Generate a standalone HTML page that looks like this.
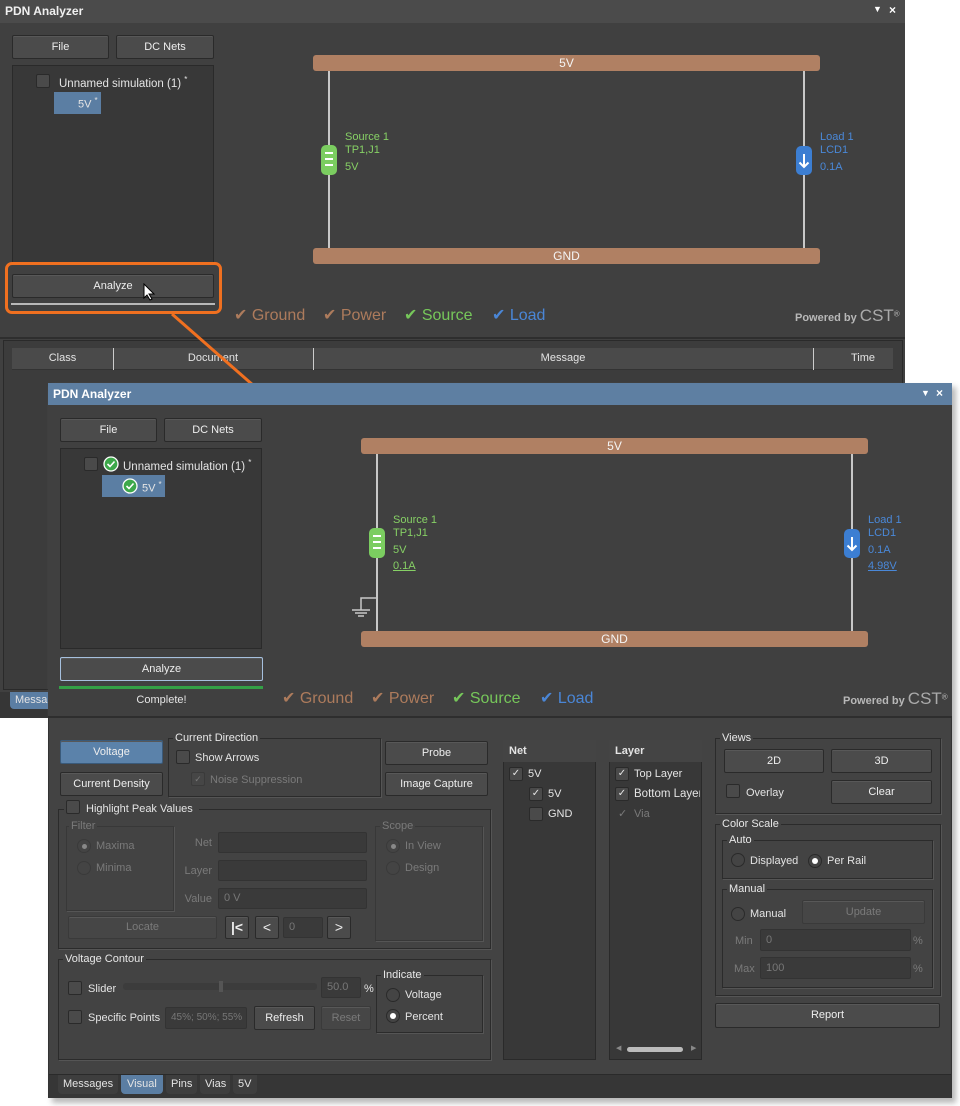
<!DOCTYPE html>
<html><head><meta charset="utf-8"><style>
*{box-sizing:border-box;margin:0;padding:0}
body{width:960px;height:1106px;background:#fff;position:relative;overflow:hidden;font-family:"Liberation Sans",sans-serif;font-size:11px;color:#e4e4e4}
.a{position:absolute}
.btn{position:absolute;background:#4b4b4b;border:1px solid #2a2a2a;border-radius:2px;text-align:center;color:#eee;font-size:11px;box-shadow:inset 0 1px 0 #585858}
.gb{position:absolute;border:1px solid #2b2b2b;box-shadow:1px 1px 0 #555}
.gt{position:absolute;top:-8px;left:6px;background:#434343;padding:0 2px;font-size:11px;color:#e8e8e8;line-height:14px}
.cb{position:absolute;width:14px;height:14px;border:1px solid #2a2a2a;background:#4a4a4a;border-radius:2px}
.rd{position:absolute;width:14px;height:14px;border:1px solid #2a2a2a;background:#444;border-radius:50%}
.inp{position:absolute;background:#3a3a3a;border:1px solid #333;border-radius:2px;color:#777;padding-left:5px;font-size:11px}
.dis{color:#7a7a7a}
.rail{position:absolute;background:#b08063;border-radius:3px;text-align:center;color:#f4f4f4;font-size:12px;line-height:16px}
.vl{position:absolute;width:2px;background:#c8c8c8}
.lg{position:absolute;font-size:16px;line-height:18px}
</style></head><body>

<!-- WINDOW 1 -->
<div class="a" style="left:0;top:0;width:905px;height:718px;background:#404040"></div>
<div class="a" style="left:0;top:0;width:905px;height:23px;background:#4b4b4b"></div>
<div class="a" style="left:5px;top:4px;font-weight:bold;font-size:12px;color:#f0f0f0">PDN Analyzer</div>
<div class="a" style="left:873px;top:4px;font-size:9px;color:#fff">▼</div>
<div class="a" style="left:889px;top:3px;font-size:12px;color:#fff;font-weight:bold">×</div>
<div class="btn" style="left:12px;top:35px;width:97px;height:24px;line-height:22px">File</div>
<div class="btn" style="left:116px;top:35px;width:98px;height:24px;line-height:22px">DC Nets</div>
<div class="a" style="left:12px;top:65px;width:202px;height:200px;background:#383838;border:1px solid #2a2a2a"></div>
<div class="cb" style="left:36px;top:74px"></div>
<div class="a" style="left:59px;top:75px;font-size:11.5px">Unnamed simulation (1) <sup style="font-size:8px">*</sup></div>
<div class="a" style="left:54px;top:92px;width:47px;height:22px;background:#5b7ea3;padding:4px 0 0 24px">5V <sup style="font-size:8px">*</sup></div>
<div class="btn" style="left:12px;top:274px;width:202px;height:24px;line-height:22px">Analyze</div>
<div class="a" style="left:11px;top:303px;width:204px;height:2px;background:#b8b8b8"></div>
<svg class="a" style="left:142px;top:283px" width="14" height="18"><path d="M2 1 L2 15 L5 12 L8 17 L10 16 L7 11 L12 11 Z" fill="#fff" stroke="#000" stroke-width="1"/></svg>
<div class="a" style="left:5px;top:262px;width:217px;height:52px;border:3px solid #f07020;border-radius:7px"></div>
<div class="rail" style="left:313px;top:55px;width:507px;height:16px">5V</div>
<div class="rail" style="left:313px;top:248px;width:507px;height:16px">GND</div>
<div class="vl" style="left:328px;top:71px;height:177px"></div>
<div class="vl" style="left:803px;top:71px;height:177px"></div>
<div class="a" style="left:321px;top:145px;width:16px;height:30px;background:#7bcd60;border-radius:5px"></div>
<div class="a" style="left:325px;top:152px;width:8px;height:14px;border-top:2px solid #fff;border-bottom:2px solid #fff"><div style="margin-top:4px;height:2px;background:#fff"></div></div>
<div class="a" style="left:345px;top:131px;color:#86d065;font-size:11px;line-height:13px">Source 1<br>TP1,J1<br><span style="line-height:20px">5V</span></div>
<div class="a" style="left:796px;top:146px;width:16px;height:29px;background:#3c7ed2;border-radius:5px"></div>
<svg class="a" style="left:796px;top:146px" width="16" height="29"><path d="M8 8 V21 M3.5 16.5 L8 21 L12.5 16.5" stroke="#fff" stroke-width="2" fill="none"/></svg>
<div class="a" style="left:820px;top:131px;color:#4a88d8;font-size:11px;line-height:13px">Load 1<br>LCD1<br><span style="line-height:20px">0.1A</span></div>
<div class="lg" style="left:234px;top:307px;color:#ad7b5c">✔ Ground</div>
<div class="lg" style="left:323px;top:307px;color:#ad7b5c">✔ Power</div>
<div class="lg" style="left:404px;top:307px;color:#76c75a">✔ Source</div>
<div class="lg" style="left:492px;top:307px;color:#4a86d6">✔ Load</div>
<div class="a" style="left:795px;top:306px;color:#b8b8b8;font-size:11px;font-weight:bold">Powered by <span style="font-size:17px;font-weight:normal;color:#aaa">CST</span><sup style="font-size:8px;font-weight:normal">®</sup></div>
<div class="a" style="left:0;top:337px;width:905px;height:2px;background:#2e2e2e"></div>
<div class="a" style="left:3px;top:340px;width:900px;height:350px;background:#3c3c3c;border:1px solid #2a2a2a"></div>
<div class="a" style="left:12px;top:348px;width:881px;height:22px;background:#4a4a4a;border-bottom:1px solid #333"></div>
<div class="a" style="left:12px;top:352px;width:101px;text-align:center">Class</div>
<div class="a" style="left:113px;top:348px;width:1px;height:22px;background:#ccc"></div>
<div class="a" style="left:113px;top:352px;width:200px;text-align:center">Document</div>
<div class="a" style="left:313px;top:348px;width:1px;height:22px;background:#ccc"></div>
<div class="a" style="left:313px;top:352px;width:500px;text-align:center">Message</div>
<div class="a" style="left:813px;top:348px;width:1px;height:22px;background:#ccc"></div>
<div class="a" style="left:813px;top:352px;width:100px;text-align:center">Time</div>
<div class="a" style="left:0;top:692px;width:905px;height:26px;background:#363636"></div>
<div class="a" style="left:10px;top:692px;width:50px;height:17px;background:#5b7ea3;border-radius:0 0 4px 4px;padding:2px 0 0 5px">Messa</div>
<svg class="a" style="left:0;top:0" width="960" height="1106"><line x1="172" y1="314" x2="262" y2="393" stroke="#f07020" stroke-width="3"/><path d="M270 400 L256 394 L264 386 Z" fill="#f07020"/></svg>

<!-- WINDOW 2 -->
<div class="a" style="left:52px;top:387px;width:904px;height:716px;background:#9a9a9a;filter:blur(3px);opacity:.7"></div>
<div class="a" style="left:48px;top:383px;width:904px;height:715px;background:#434343;border:1px solid #333"></div>
<div class="a" style="left:48px;top:383px;width:904px;height:22px;background:#5e7fa2"></div>
<div class="a" style="left:53px;top:387px;font-weight:bold;font-size:12px;color:#fff">PDN Analyzer</div>
<div class="a" style="left:921px;top:388px;font-size:9px;color:#fff">▼</div>
<div class="a" style="left:936px;top:386px;font-size:12px;color:#fff;font-weight:bold">×</div>
<div class="a" style="left:48px;top:405px;width:904px;height:312px;background:#404040"></div>
<div class="btn" style="left:60px;top:418px;width:97px;height:24px;line-height:22px">File</div>
<div class="btn" style="left:164px;top:418px;width:98px;height:24px;line-height:22px">DC Nets</div>
<div class="a" style="left:60px;top:448px;width:202px;height:201px;background:#383838;border:1px solid #2a2a2a"></div>
<div class="cb" style="left:84px;top:457px"></div>
<svg class="a" style="left:103px;top:456px" width="16" height="16"><circle cx="8" cy="8" r="7" fill="#3da84a" stroke="#fff" stroke-width="1.3"/><path d="M4.5 8 L7 10.5 L11.5 5.5" stroke="#fff" stroke-width="1.6" fill="none"/></svg>
<div class="a" style="left:123px;top:458px;font-size:11.5px">Unnamed simulation (1) <sup style="font-size:8px">*</sup></div>
<div class="a" style="left:102px;top:475px;width:63px;height:22px;background:#5b7ea3"></div>
<svg class="a" style="left:122px;top:478px" width="16" height="16"><circle cx="8" cy="8" r="7" fill="#3da84a" stroke="#fff" stroke-width="1.3"/><path d="M4.5 8 L7 10.5 L11.5 5.5" stroke="#fff" stroke-width="1.6" fill="none"/></svg>
<div class="a" style="left:142px;top:480px">5V <sup style="font-size:8px">*</sup></div>
<div class="btn" style="left:60px;top:657px;width:203px;height:24px;line-height:22px;border-color:#a6c0de">Analyze</div>
<div class="a" style="left:59px;top:686px;width:204px;height:3px;background:#34a046"></div>
<div class="a" style="left:60px;top:694px;width:203px;text-align:center">Complete!</div>
<div class="rail" style="left:361px;top:438px;width:507px;height:16px">5V</div>
<div class="rail" style="left:361px;top:631px;width:507px;height:16px">GND</div>
<div class="vl" style="left:376px;top:454px;height:177px"></div>
<div class="vl" style="left:851px;top:454px;height:177px"></div>
<div class="a" style="left:369px;top:528px;width:16px;height:30px;background:#7bcd60;border-radius:5px"></div>
<div class="a" style="left:373px;top:535px;width:8px;height:14px;border-top:2px solid #fff;border-bottom:2px solid #fff"><div style="margin-top:4px;height:2px;background:#fff"></div></div>
<svg class="a" style="left:348px;top:596px" width="30" height="22"><path d="M29 2 H13 V14 M4 14 H22 M7 17 H19 M10 20 H16" stroke="#c8c8c8" stroke-width="1.5" fill="none"/></svg>
<div class="a" style="left:393px;top:514px;color:#86d065;font-size:11px;line-height:13px">Source 1<br>TP1,J1<br><span style="line-height:20px">5V</span><br><u>0.1A</u></div>
<div class="a" style="left:844px;top:529px;width:16px;height:29px;background:#3c7ed2;border-radius:5px"></div>
<svg class="a" style="left:844px;top:529px" width="16" height="29"><path d="M8 8 V21 M3.5 16.5 L8 21 L12.5 16.5" stroke="#fff" stroke-width="2" fill="none"/></svg>
<div class="a" style="left:868px;top:514px;color:#4a88d8;font-size:11px;line-height:13px">Load 1<br>LCD1<br><span style="line-height:20px">0.1A</span><br><u>4.98V</u></div>
<div class="lg" style="left:282px;top:690px;color:#ad7b5c">✔ Ground</div>
<div class="lg" style="left:371px;top:690px;color:#ad7b5c">✔ Power</div>
<div class="lg" style="left:452px;top:690px;color:#76c75a">✔ Source</div>
<div class="lg" style="left:540px;top:690px;color:#4a86d6">✔ Load</div>
<div class="a" style="left:843px;top:689px;color:#b8b8b8;font-size:11px;font-weight:bold">Powered by <span style="font-size:17px;font-weight:normal;color:#aaa">CST</span><sup style="font-size:8px;font-weight:normal">®</sup></div>
<div class="a" style="left:48px;top:716px;width:904px;height:2px;background:#2e2e2e"></div>

<!-- lower controls -->
<div class="btn" style="left:60px;top:740px;width:103px;height:24px;line-height:22px;background:#5b82aa;border-color:#3a5a7a">Voltage</div>
<div class="btn" style="left:60px;top:772px;width:103px;height:24px;line-height:22px">Current Density</div>
<div class="gb" style="left:168px;top:738px;width:213px;height:59px"><div class="gt" style="left:4px">Current Direction</div></div>
<div class="cb" style="left:176px;top:750px"></div>
<div class="a" style="left:195px;top:752px">Show Arrows</div>
<div class="cb" style="left:191px;top:772px;border-color:#3a3a3a;background:#464646;color:#777;font-size:9px;line-height:12px;text-align:center">✓</div>
<div class="a dis" style="left:210px;top:774px">Noise Suppression</div>
<div class="btn" style="left:385px;top:741px;width:103px;height:24px;line-height:22px">Probe</div>
<div class="btn" style="left:385px;top:772px;width:103px;height:24px;line-height:22px">Image Capture</div>

<div class="gb" style="left:58px;top:809px;width:433px;height:140px"></div>
<div class="a" style="left:64px;top:802px;width:135px;height:14px;background:#434343"></div>
<div class="cb" style="left:66px;top:800px"></div>
<div class="a" style="left:86px;top:803px">Highlight Peak Values</div>
<div class="gb" style="left:66px;top:826px;width:108px;height:85px;border-color:#383838"><div class="gt dis" style="left:2px">Filter</div></div>
<div class="rd" style="left:77px;top:839px;border-color:#3a3a3a"><div style="width:5px;height:5px;background:#888;border-radius:50%;margin:3.5px"></div></div>
<div class="a dis" style="left:96px;top:840px">Maxima</div>
<div class="rd" style="left:77px;top:861px;border-color:#3a3a3a"></div>
<div class="a dis" style="left:96px;top:862px">Minima</div>
<div class="a dis" style="left:186px;top:837px;width:26px;text-align:right">Net</div>
<div class="a dis" style="left:176px;top:865px;width:36px;text-align:right">Layer</div>
<div class="a dis" style="left:176px;top:893px;width:36px;text-align:right">Value</div>
<div class="inp" style="left:218px;top:832px;width:149px;height:21px"></div>
<div class="inp" style="left:218px;top:860px;width:149px;height:21px"></div>
<div class="inp" style="left:218px;top:888px;width:149px;height:21px;line-height:19px">0 V</div>
<div class="btn dis" style="left:68px;top:916px;width:149px;height:23px;line-height:21px;background:#464646;border-color:#3a3a3a;color:#7a7a7a">Locate</div>
<div class="btn" style="left:225px;top:916px;width:24px;height:23px;line-height:21px;font-size:14px;font-weight:bold">|&lt;</div>
<div class="btn" style="left:255px;top:916px;width:24px;height:23px;line-height:21px;font-size:14px">&lt;</div>
<div class="inp" style="left:283px;top:917px;width:40px;height:21px;line-height:19px">0</div>
<div class="btn" style="left:327px;top:916px;width:24px;height:23px;line-height:21px;font-size:14px">&gt;</div>
<div class="gb" style="left:375px;top:826px;width:108px;height:115px;border-color:#383838"><div class="gt dis" style="left:4px">Scope</div></div>
<div class="rd" style="left:386px;top:839px;border-color:#3a3a3a"><div style="width:5px;height:5px;background:#888;border-radius:50%;margin:3.5px"></div></div>
<div class="a dis" style="left:405px;top:840px">In View</div>
<div class="rd" style="left:386px;top:861px;border-color:#3a3a3a"></div>
<div class="a dis" style="left:405px;top:862px">Design</div>

<div class="gb" style="left:58px;top:959px;width:433px;height:101px"><div class="gt" style="left:4px">Voltage Contour</div></div>
<div class="cb" style="left:68px;top:981px"></div>
<div class="a" style="left:88px;top:983px">Slider</div>
<div class="a" style="left:123px;top:983px;width:194px;height:7px;background:#3c3c3c;border-radius:3px"></div>
<div class="a" style="left:219px;top:981px;width:4px;height:11px;background:#555"></div>
<div class="inp" style="left:321px;top:977px;width:40px;height:21px;line-height:19px">50.0</div>
<div class="a" style="left:364px;top:983px">%</div>
<div class="cb" style="left:68px;top:1010px"></div>
<div class="a" style="left:88px;top:1012px">Specific Points</div>
<div class="inp" style="left:165px;top:1007px;width:82px;height:22px;line-height:20px;font-size:10px">45%; 50%; 55%</div>
<div class="btn" style="left:254px;top:1006px;width:61px;height:24px;line-height:22px">Refresh</div>
<div class="btn" style="left:321px;top:1006px;width:50px;height:24px;line-height:22px;background:#464646;border-color:#3a3a3a;color:#7a7a7a">Reset</div>
<div class="gb" style="left:376px;top:975px;width:107px;height:58px"><div class="gt" style="left:4px">Indicate</div></div>
<div class="rd" style="left:386px;top:988px"></div>
<div class="a" style="left:405px;top:989px">Voltage</div>
<div class="rd" style="left:386px;top:1009px"><div style="width:6px;height:6px;background:#fff;border-radius:50%;margin:3px"></div></div>
<div class="a" style="left:405px;top:1011px">Percent</div>

<div class="a" style="left:503px;top:740px;width:93px;height:320px;background:#383838;border:1px solid #2a2a2a"></div>
<div class="a" style="left:503px;top:740px;width:93px;height:22px;background:#444"></div>
<div class="a" style="left:509px;top:745px;font-weight:bold">Net</div>
<div class="cb" style="left:509px;top:767px;font-size:10px;line-height:12px;text-align:center">✓</div>
<div class="a" style="left:528px;top:768px">5V</div>
<div class="cb" style="left:529px;top:787px;font-size:10px;line-height:12px;text-align:center">✓</div>
<div class="a" style="left:548px;top:788px">5V</div>
<div class="cb" style="left:529px;top:807px"></div>
<div class="a" style="left:548px;top:808px">GND</div>
<div class="a" style="left:609px;top:740px;width:93px;height:320px;background:#383838;border:1px solid #2a2a2a"></div>
<div class="a" style="left:609px;top:740px;width:93px;height:22px;background:#444"></div>
<div class="a" style="left:615px;top:745px;font-weight:bold">Layer</div>
<div class="cb" style="left:615px;top:767px;font-size:10px;line-height:12px;text-align:center">✓</div>
<div class="a" style="left:634px;top:768px">Top Layer</div>
<div class="cb" style="left:615px;top:787px;font-size:10px;line-height:12px;text-align:center">✓</div>
<div class="a" style="left:634px;top:788px;width:66px;overflow:hidden;white-space:nowrap;font-size:11.5px">Bottom Layer</div>
<div class="a dis" style="left:618px;top:807px">✓</div>
<div class="a dis" style="left:634px;top:808px">Via</div>
<div class="a" style="left:627px;top:1047px;width:56px;height:5px;background:#bbb;border-radius:3px"></div>
<div class="a" style="left:616px;top:1044px;font-size:7px;color:#888">◀</div>
<div class="a" style="left:691px;top:1044px;font-size:7px;color:#888">▶</div>

<div class="gb" style="left:715px;top:738px;width:226px;height:76px"><div class="gt" style="left:4px">Views</div></div>
<div class="btn" style="left:724px;top:749px;width:100px;height:24px;line-height:22px">2D</div>
<div class="btn" style="left:831px;top:749px;width:101px;height:24px;line-height:22px">3D</div>
<div class="cb" style="left:726px;top:784px"></div>
<div class="a" style="left:746px;top:787px">Overlay</div>
<div class="btn" style="left:831px;top:780px;width:101px;height:24px;line-height:22px">Clear</div>
<div class="gb" style="left:715px;top:824px;width:226px;height:172px"><div class="gt" style="left:4px">Color Scale</div></div>
<div class="gb" style="left:722px;top:840px;width:211px;height:39px"><div class="gt" style="left:4px">Auto</div></div>
<div class="rd" style="left:731px;top:853px"></div>
<div class="a" style="left:750px;top:855px">Displayed</div>
<div class="rd" style="left:808px;top:854px"><div style="width:6px;height:6px;background:#fff;border-radius:50%;margin:3px"></div></div>
<div class="a" style="left:827px;top:855px">Per Rail</div>
<div class="gb" style="left:722px;top:889px;width:211px;height:99px"><div class="gt" style="left:4px">Manual</div></div>
<div class="rd" style="left:731px;top:907px"></div>
<div class="a" style="left:750px;top:908px">Manual</div>
<div class="btn" style="left:802px;top:900px;width:123px;height:24px;line-height:22px;background:#464646;border-color:#3a3a3a;color:#7a7a7a">Update</div>
<div class="a dis" style="left:735px;top:935px">Min</div>
<div class="inp" style="left:760px;top:929px;width:151px;height:22px;line-height:20px">0</div>
<div class="a dis" style="left:913px;top:935px">%</div>
<div class="a dis" style="left:734px;top:963px">Max</div>
<div class="inp" style="left:760px;top:957px;width:151px;height:22px;line-height:20px">100</div>
<div class="a dis" style="left:913px;top:963px">%</div>
<div class="btn" style="left:715px;top:1003px;width:225px;height:25px;line-height:23px">Report</div>

<div class="a" style="left:49px;top:1074px;width:902px;height:24px;background:#363636;border-top:1px solid #2a2a2a"></div>
<div class="a" style="left:58px;top:1075px;width:60px;height:19px;background:#3e3e3e;border-radius:0 0 4px 4px;padding:3px 0 0 5px">Messages</div>
<div class="a" style="left:121px;top:1075px;width:42px;height:19px;background:#5b7ea3;border-radius:0 0 4px 4px;padding:3px 0 0 6px">Visual</div>
<div class="a" style="left:166px;top:1075px;width:31px;height:19px;background:#3e3e3e;border-radius:0 0 4px 4px;padding:3px 0 0 5px">Pins</div>
<div class="a" style="left:200px;top:1075px;width:30px;height:19px;background:#3e3e3e;border-radius:0 0 4px 4px;padding:3px 0 0 5px">Vias</div>
<div class="a" style="left:233px;top:1075px;width:24px;height:19px;background:#3e3e3e;border-radius:0 0 4px 4px;padding:3px 0 0 5px">5V</div>
</body></html>
